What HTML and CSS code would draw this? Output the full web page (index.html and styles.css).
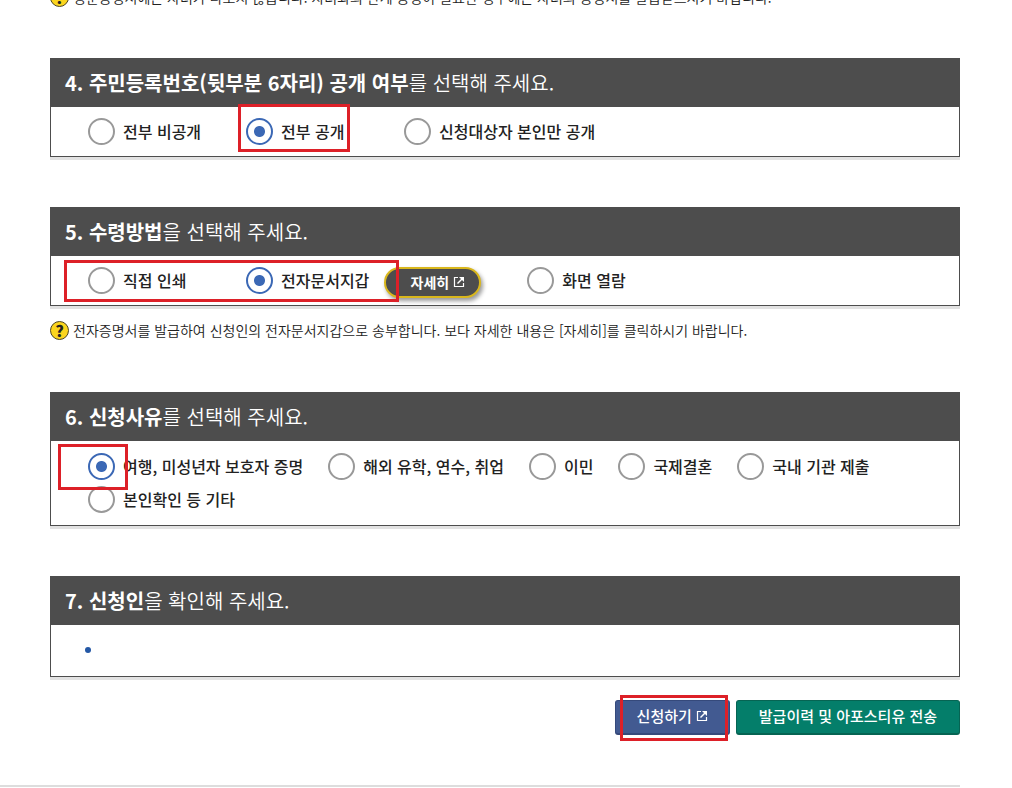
FILE: index.html
```html
<!DOCTYPE html>
<html lang="ko">
<head>
<meta charset="utf-8">
<title>증명서 신청</title>
<link rel="stylesheet" href="styles.css">
</head>
<body>
<svg class="defs" aria-hidden="true">
  <symbol id="popup" viewBox="0 0 12 12">
    <path d="M5 1.5H1.5V10.5H10.5V7" fill="none" stroke="currentColor" stroke-width="1.2"/>
    <path d="M4.5 7.5L9.5 2.5" fill="none" stroke="currentColor" stroke-width="1.4"/>
    <path d="M6 1H11V6Z" fill="currentColor"/>
  </symbol>
</svg>
<main class="page">
  <form class="form">
    <p class="hint hint-top"><span class="hint-icon">?</span>영문증명서에는 자녀가 나오지 않습니다. 자녀와의 관계 증명이 필요한 경우에는 자녀의 증명서를 발급받으시기 바랍니다.</p>

    <section class="panel">
      <h2 class="panel-title"><strong>4. 주민등록번호(뒷부분 6자리) 공개 여부</strong>를 선택해 주세요.</h2>
      <div class="options options-even">
        <label class="option"><input type="radio" name="reveal">전부 비공개</label>
        <label class="option"><input type="radio" name="reveal" checked>전부 공개</label>
        <label class="option"><input type="radio" name="reveal">신청대상자 본인만 공개</label>
      </div>
      <span class="mark mark-reveal"></span>
    </section>

    <section class="panel">
      <h2 class="panel-title"><strong>5. 수령방법</strong>을 선택해 주세요.</h2>
      <div class="options options-even">
        <label class="option"><input type="radio" name="receive">직접 인쇄</label>
        <div class="option-group">
          <label class="option"><input type="radio" name="receive" checked>전자문서지갑</label>
          <button type="button" class="detail">자세히<svg class="popup"><use href="#popup"/></svg></button>
        </div>
        <label class="option"><input type="radio" name="receive">화면 열람</label>
      </div>
      <span class="mark mark-receive"></span>
    </section>
    <p class="hint"><span class="hint-icon">?</span>전자증명서를 발급하여 신청인의 전자문서지갑으로 송부합니다. 보다 자세한 내용은 [자세히]를 클릭하시기 바랍니다.</p>

    <section class="panel">
      <h2 class="panel-title"><strong>6. 신청사유</strong>를 선택해 주세요.</h2>
      <div class="options options-wrap">
        <label class="option"><input type="radio" name="reason" checked>여행, 미성년자 보호자 증명</label>
        <label class="option"><input type="radio" name="reason">해외 유학, 연수, 취업</label>
        <label class="option"><input type="radio" name="reason">이민</label>
        <label class="option"><input type="radio" name="reason">국제결혼</label>
        <label class="option"><input type="radio" name="reason">국내 기관 제출</label>
        <label class="option"><input type="radio" name="reason">본인확인 등 기타</label>
      </div>
      <span class="mark mark-reason"></span>
    </section>

    <section class="panel">
      <h2 class="panel-title"><strong>7. 신청인</strong>을 확인해 주세요.</h2>
      <ul class="applicant"><li></li></ul>
    </section>

    <div class="actions">
      <button type="submit" class="button button-apply">신청하기<svg class="popup"><use href="#popup"/></svg><span class="mark mark-apply"></span></button>
      <button type="button" class="button button-send">발급이력 및 아포스티유 전송</button>
    </div>
  </form>
</main>
</body>
</html>
```
FILE: styles.css
```css
* { box-sizing: border-box; }
body {
  margin: 0;
  background: #fff;
  color: #222;
  font-family: "Noto Sans CJK KR", sans-serif;
  font-size: 16px;
}
.defs { position: absolute; width: 0; height: 0; }
.page {
  margin-right: 52px;
  padding-left: 50px;
  overflow: hidden;
  border-bottom: 2px solid #ddd;
}
.panel {
  position: relative;
  margin-bottom: 50px;
  border: 1px solid #4d4d4d;
  border-top: 0;
  box-shadow: 0 3px 0 #e2e2e2;
}
.panel-title {
  margin: 0 -1px;
  padding: 0 15px;
  background: #4d4d4d;
  color: #fff;
  font-size: 20px;
  font-weight: 350;
  line-height: 49px;
}
.panel-title strong { font-weight: 700; }
.options {
  display: flex;
  flex-wrap: wrap;
  align-items: center;
  gap: 6px 24px;
  padding: 11px 37px;
}
.options-wrap { column-gap: 25px; padding: 12px 37px; }
.option {
  display: flex;
  align-items: center;
  gap: 8px;
  line-height: 27px;
  font-weight: 500;
}
.options-even > .option { min-width: 134px; }
.option-group { display: flex; align-items: center; gap: 15px; margin-right: 22px; }
.option input {
  appearance: none;
  flex: none;
  width: 27px;
  height: 27px;
  margin: 0;
  border: 2px solid #999;
  border-radius: 50%;
  background: #fff;
}
.option input:checked {
  border-color: #3b68b5;
  background: radial-gradient(circle, #3b68b5 5px, #fff 6px);
}
.detail {
  display: flex;
  align-items: center;
  justify-content: center;
  gap: 4px;
  width: 97px;
  height: 31px;
  margin: -4px 0 -8px;
  padding: 0 0 2px 10px;
  border: 2px solid #d9b71c;
  border-radius: 16px;
  background: #4d4d4d;
  box-shadow: 2px 3px 4px rgba(0, 0, 0, .4);
  color: #fff;
  font: 700 14px/20px "Noto Sans CJK KR", sans-serif;
}
.popup { width: 12px; height: 12px; }
.hint {
  display: flex;
  align-items: center;
  gap: 4px;
  margin: -36px 0 51px;
  color: #222;
  font-size: 14px;
  font-weight: 350;
  line-height: 21px;
}
.hint-top { margin: -13px 0 50px; }
.hint-icon {
  flex: none;
  width: 19px;
  height: 19px;
  border: 1px solid #4d4520;
  border-radius: 50%;
  background: #fbd51d;
  color: #222;
  font: 900 16px/17px "Noto Sans CJK KR", sans-serif;
  text-align: center;
}
.applicant { margin: 0; padding: 22px 34px 23px; list-style: none; }
.applicant li { width: 6px; height: 6px; border-radius: 50%; background: #2457a5; }
.actions {
  display: flex;
  justify-content: flex-end;
  gap: 6px;
  margin: -27px 0 50px;
}
.button {
  position: relative;
  display: flex;
  align-items: center;
  justify-content: center;
  gap: 4px;
  height: 35px;
  padding: 0 21px 2px;
  border: 1px solid;
  border-bottom-width: 2px;
  border-radius: 3px;
  color: #fff;
  font: 500 15px/22px "Noto Sans CJK KR", sans-serif;
}
.button-apply { background: #425a91; border-color: #35497b; }
.button-send { padding: 0 22px 2px; background: #047e6a; border-color: #066453; }
.mark {
  position: absolute;
  border: 3px solid #dd2028;
  pointer-events: none;
}
.mark-reveal { top: 46px; left: 187px; width: 112px; height: 48px; }
.mark-receive { top: 53px; left: 13px; width: 335px; height: 42px; }
.mark-reason { top: 52px; left: 7px; width: 70px; height: 46px; }
.mark-apply { inset: -6px 1px -8px 4px; }
```
